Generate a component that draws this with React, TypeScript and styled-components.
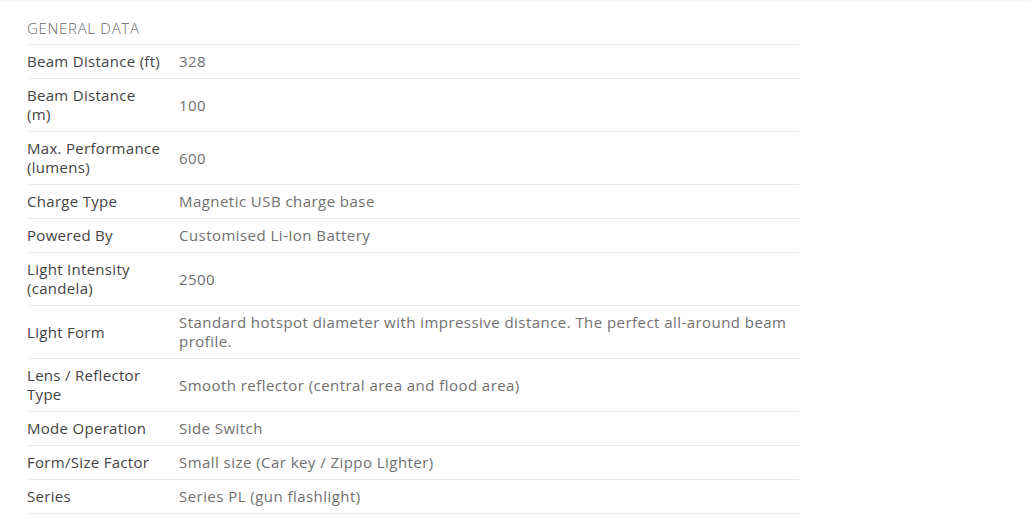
import { Fragment } from "react";
import styled, { createGlobalStyle } from "styled-components";

const GlobalStyle = createGlobalStyle`
  body {
    margin: 0;
    background: #fff;
    font-family: "Open Sans", "Liberation Sans", sans-serif;
  }
`;

const TopEdge = styled.div`
  height: 2px;
  background: #f6f6f6;
`;

const Section = styled.section`
  padding: 10px 0 0 27px;
`;

const SpecTable = styled.table`
  width: 772px;
  border-collapse: collapse;
  font-size: 15px;
  line-height: 19px;
`;

const HeadCell = styled.th`
  text-align: left;
  font-weight: 300;
  color: #666;
  text-transform: uppercase;
  letter-spacing: 0.7px;
  padding: 7px 0 6px;
  border-bottom: 1px solid #e9e9e9;
`;

const Row = styled.tr`
  border-bottom: 1px solid #e9e9e9;
`;

const Label = styled.td`
  width: 152px;
  padding: 7px 0;
  font-weight: 500;
  color: #444;
  letter-spacing: 0.3px;
  white-space: nowrap;
  vertical-align: middle;
`;

const Value = styled.td`
  padding: 7px 0;
  font-weight: 400;
  color: #707070;
  letter-spacing: 0.45px;
  white-space: nowrap;
  vertical-align: middle;
`;

type Spec = { label: string[]; value: string[] };

const specs: Spec[] = [
  { label: ["Beam Distance (ft)"], value: ["328"] },
  { label: ["Beam Distance", "(m)"], value: ["100"] },
  { label: ["Max. Performance", "(lumens)"], value: ["600"] },
  { label: ["Charge Type"], value: ["Magnetic USB charge base"] },
  { label: ["Powered By"], value: ["Customised Li-Ion Battery"] },
  { label: ["Light Intensity", "(candela)"], value: ["2500"] },
  {
    label: ["Light Form"],
    value: [
      "Standard hotspot diameter with impressive distance. The perfect all-around beam",
      "profile.",
    ],
  },
  {
    label: ["Lens / Reflector", "Type"],
    value: ["Smooth reflector (central area and flood area)"],
  },
  { label: ["Mode Operation"], value: ["Side Switch"] },
  { label: ["Form/Size Factor"], value: ["Small size (Car key / Zippo Lighter)"] },
  { label: ["Series"], value: ["Series PL (gun flashlight)"] },
];

function Lines({ parts }: { parts: string[] }) {
  return (
    <>
      {parts.map((p, i) => (
        <Fragment key={i}>
          {i > 0 && <br />}
          {p}
        </Fragment>
      ))}
    </>
  );
}

export default function App() {
  return (
    <>
      <GlobalStyle />
      <TopEdge />
      <Section>
        <SpecTable>
          <thead>
            <tr>
              <HeadCell colSpan={2}>General Data</HeadCell>
            </tr>
          </thead>
          <tbody>
            {specs.map((s) => (
              <Row key={s.label.join(" ")}>
                <Label>
                  <Lines parts={s.label} />
                </Label>
                <Value>
                  <Lines parts={s.value} />
                </Value>
              </Row>
            ))}
          </tbody>
        </SpecTable>
      </Section>
    </>
  );
}
